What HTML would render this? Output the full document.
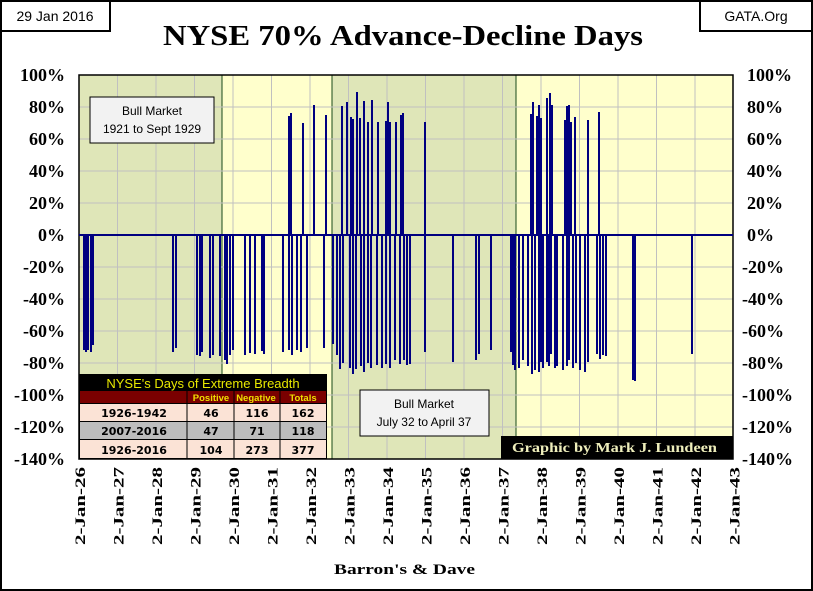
<!DOCTYPE html>
<html><head><meta charset="utf-8"><style>
body{margin:0;background:#fff;}
svg{display:block;}
</style></head><body>
<svg width="813" height="591" xmlns="http://www.w3.org/2000/svg" font-family="Liberation Serif, serif">
<rect x="1" y="1" width="811" height="589" fill="#fff" stroke="#000" stroke-width="2"/>
<rect x="1" y="1" width="109" height="30" fill="#fff" stroke="#000" stroke-width="2"/>
<text x="55" y="21" font-family="Liberation Sans, sans-serif" font-size="14" text-anchor="middle">29 Jan 2016</text>
<rect x="700" y="1" width="112" height="30" fill="#fff" stroke="#000" stroke-width="2"/>
<text x="756" y="21" font-family="Liberation Sans, sans-serif" font-size="14" text-anchor="middle">GATA.Org</text>
<text x="163" y="45" font-size="29" font-weight="bold" textLength="480" lengthAdjust="spacingAndGlyphs">NYSE 70% Advance-Decline Days</text>
<rect x="79" y="75" width="654" height="384" fill="#ffffcc"/>
<rect x="79" y="75" width="143" height="384" fill="#dfe6b8" stroke="#1a4a1a" stroke-width="1"/>
<rect x="332" y="75" width="184" height="384" fill="#dfe6b8" stroke="#1a4a1a" stroke-width="1"/>
<g stroke="#c0c0c0" stroke-width="1">
<line x1="79" y1="107" x2="733" y2="107"/><line x1="79" y1="139" x2="733" y2="139"/><line x1="79" y1="171" x2="733" y2="171"/><line x1="79" y1="203" x2="733" y2="203"/><line x1="79" y1="267" x2="733" y2="267"/><line x1="79" y1="299" x2="733" y2="299"/><line x1="79" y1="331" x2="733" y2="331"/><line x1="79" y1="363" x2="733" y2="363"/><line x1="79" y1="395" x2="733" y2="395"/><line x1="79" y1="427" x2="733" y2="427"/>
<line x1="117.5" y1="75" x2="117.5" y2="459"/><line x1="156" y1="75" x2="156" y2="459"/><line x1="194.5" y1="75" x2="194.5" y2="459"/><line x1="233" y1="75" x2="233" y2="459"/><line x1="271.5" y1="75" x2="271.5" y2="459"/><line x1="310" y1="75" x2="310" y2="459"/><line x1="348.5" y1="75" x2="348.5" y2="459"/><line x1="387" y1="75" x2="387" y2="459"/><line x1="425.5" y1="75" x2="425.5" y2="459"/><line x1="464" y1="75" x2="464" y2="459"/><line x1="502.5" y1="75" x2="502.5" y2="459"/><line x1="541" y1="75" x2="541" y2="459"/><line x1="579.5" y1="75" x2="579.5" y2="459"/><line x1="618" y1="75" x2="618" y2="459"/><line x1="656.5" y1="75" x2="656.5" y2="459"/><line x1="695" y1="75" x2="695" y2="459"/>
</g>
<rect x="79" y="75" width="654" height="384" fill="none" stroke="#000" stroke-width="1.5"/>
<g stroke="#000080" stroke-width="2">
<line x1="79" y1="235" x2="733" y2="235"/>
<path d="M289 235V116M291 235V113M303 235V123M314 235V105M326 235V115M342 235V106M347 235V102M351 235V117M353 235V119M357 235V92M360 235V118M364 235V101M368 235V122M372 235V100M378 235V122M386 235V121M388 235V102M390 235V122M396 235V122M401 235V115M403 235V113M425 235V122M531 235V114M533 235V102M537 235V116M539 235V105M541 235V118M547 235V98M550 235V93M552 235V105M565 235V120M567 235V106M569 235V105M571 235V122M575 235V117M588 235V120M599 235V112"/>
<path d="M84 235V350M86 235V352M88 235V350M91 235V352M93 235V345M173 235V352M176 235V348M197 235V355M200 235V356M202 235V352M210 235V358M213 235V355M220 235V356M225 235V360M227 235V364M230 235V355M233 235V350M245 235V355M250 235V353M255 235V354M262 235V351M264 235V354M283 235V352M289 235V350M292 235V355M297 235V350M301 235V352M307 235V348M324 235V348M333 235V344M337 235V355M340 235V369M343 235V363M350 235V368M353 235V374M356 235V369M361 235V366M364 235V372M368 235V363M371 235V368M377 235V365M382 235V368M386 235V364M390 235V368M395 235V360M400 235V364M404 235V360M407 235V365M410 235V364M425 235V352M453 235V362M476 235V360M479 235V354M491 235V350M511 235V352M513 235V365M515 235V370M519 235V368M523 235V360M528 235V366M532 235V374M535 235V370M539 235V372M541 235V362M543 235V368M547 235V362M549 235V366M551 235V354M555 235V368M557 235V366M563 235V370M567 235V366M569 235V360M573 235V368M576 235V363M580 235V370M585 235V372M588 235V362M597 235V354M600 235V359M603 235V355M606 235V356M633 235V380M635 235V381M692 235V354"/>
</g>
<rect x="90" y="97" width="124" height="46" fill="#f2f2f2" stroke="#000" stroke-width="1"/>
<text x="152" y="115" font-family="Liberation Sans, sans-serif" font-size="12" text-anchor="middle">Bull Market</text>
<text x="152" y="133" font-family="Liberation Sans, sans-serif" font-size="12" text-anchor="middle">1921 to Sept 1929</text>
<rect x="360" y="390" width="129" height="46" fill="#f2f2f2" stroke="#000" stroke-width="1"/>
<text x="424" y="408" font-family="Liberation Sans, sans-serif" font-size="12" text-anchor="middle">Bull Market</text>
<text x="424" y="426" font-family="Liberation Sans, sans-serif" font-size="12" text-anchor="middle">July 32 to April 37</text>
<rect x="79" y="374" width="248" height="85" fill="#000"/>
<text x="203" y="388" font-family="Liberation Sans, sans-serif" font-size="13" fill="#e8e800" text-anchor="middle">NYSE's Days of Extreme Breadth</text>
<rect x="80" y="391" width="246" height="12" fill="#7a0000"/>
<g font-family="Liberation Sans, sans-serif" font-size="9.5" font-weight="bold" fill="#f0e000" text-anchor="middle">
<text x="211" y="401">Positive</text><text x="256" y="401">Negative</text><text x="303" y="401">Totals</text></g>
<rect x="80" y="404" width="246" height="17" fill="#fbe3d6"/>
<rect x="80" y="422" width="246" height="17" fill="#bdbdbd"/>
<rect x="80" y="440" width="246" height="18" fill="#fbe3d6"/>
<g stroke="#000" stroke-width="1"><line x1="187" y1="391" x2="187" y2="459"/><line x1="234" y1="391" x2="234" y2="459"/><line x1="280" y1="391" x2="280" y2="459"/><line x1="80" y1="421.5" x2="326" y2="421.5"/><line x1="80" y1="439.5" x2="326" y2="439.5"/></g>
<g font-family="DejaVu Sans, sans-serif" font-size="11" font-weight="bold" text-anchor="middle">
<text x="134" y="417">1926-1942</text><text x="211" y="417">46</text><text x="257" y="417">116</text><text x="303" y="417">162</text>
<text x="134" y="435">2007-2016</text><text x="211" y="435">47</text><text x="257" y="435">71</text><text x="303" y="435">118</text>
<text x="134" y="454">1926-2016</text><text x="211" y="454">104</text><text x="257" y="454">273</text><text x="303" y="454">377</text></g>
<rect x="501" y="436" width="232" height="23" fill="#000"/>
<text x="512" y="452" font-size="14" font-weight="bold" fill="#eeeebb" textLength="205" lengthAdjust="spacingAndGlyphs">Graphic by Mark J. Lundeen</text>
<g font-size="18" font-weight="bold">
<g text-anchor="end">
<text x="65" y="81">100%</text><text x="65" y="113">80%</text><text x="65" y="145">60%</text><text x="65" y="177">40%</text><text x="65" y="209">20%</text><text x="65" y="241">0%</text><text x="65" y="273">-20%</text><text x="65" y="305">-40%</text><text x="65" y="337">-60%</text><text x="65" y="369">-80%</text><text x="65" y="401">-100%</text><text x="65" y="433">-120%</text><text x="65" y="465">-140%</text></g>
<g text-anchor="start">
<text x="747" y="81">100%</text><text x="747" y="113">80%</text><text x="747" y="145">60%</text><text x="747" y="177">40%</text><text x="747" y="209">20%</text><text x="747" y="241">0%</text><text x="742" y="273">-20%</text><text x="742" y="305">-40%</text><text x="742" y="337">-60%</text><text x="742" y="369">-80%</text><text x="742" y="401">-100%</text><text x="742" y="433">-120%</text><text x="742" y="465">-140%</text></g>
</g>
<g font-size="15" font-weight="bold">
<text transform="translate(85,545) rotate(-90)" textLength="78" lengthAdjust="spacingAndGlyphs">2-Jan-26</text>
<text transform="translate(123.5,545) rotate(-90)" textLength="78" lengthAdjust="spacingAndGlyphs">2-Jan-27</text>
<text transform="translate(162,545) rotate(-90)" textLength="78" lengthAdjust="spacingAndGlyphs">2-Jan-28</text>
<text transform="translate(200.5,545) rotate(-90)" textLength="78" lengthAdjust="spacingAndGlyphs">2-Jan-29</text>
<text transform="translate(239,545) rotate(-90)" textLength="78" lengthAdjust="spacingAndGlyphs">2-Jan-30</text>
<text transform="translate(277.5,545) rotate(-90)" textLength="78" lengthAdjust="spacingAndGlyphs">2-Jan-31</text>
<text transform="translate(316,545) rotate(-90)" textLength="78" lengthAdjust="spacingAndGlyphs">2-Jan-32</text>
<text transform="translate(354.5,545) rotate(-90)" textLength="78" lengthAdjust="spacingAndGlyphs">2-Jan-33</text>
<text transform="translate(393,545) rotate(-90)" textLength="78" lengthAdjust="spacingAndGlyphs">2-Jan-34</text>
<text transform="translate(431.5,545) rotate(-90)" textLength="78" lengthAdjust="spacingAndGlyphs">2-Jan-35</text>
<text transform="translate(470,545) rotate(-90)" textLength="78" lengthAdjust="spacingAndGlyphs">2-Jan-36</text>
<text transform="translate(508.5,545) rotate(-90)" textLength="78" lengthAdjust="spacingAndGlyphs">2-Jan-37</text>
<text transform="translate(547,545) rotate(-90)" textLength="78" lengthAdjust="spacingAndGlyphs">2-Jan-38</text>
<text transform="translate(585.5,545) rotate(-90)" textLength="78" lengthAdjust="spacingAndGlyphs">2-Jan-39</text>
<text transform="translate(624,545) rotate(-90)" textLength="78" lengthAdjust="spacingAndGlyphs">2-Jan-40</text>
<text transform="translate(662.5,545) rotate(-90)" textLength="78" lengthAdjust="spacingAndGlyphs">2-Jan-41</text>
<text transform="translate(701,545) rotate(-90)" textLength="78" lengthAdjust="spacingAndGlyphs">2-Jan-42</text>
<text transform="translate(739.5,545) rotate(-90)" textLength="78" lengthAdjust="spacingAndGlyphs">2-Jan-43</text>
</g>
<text x="334" y="574" font-size="15" font-weight="bold" textLength="141" lengthAdjust="spacingAndGlyphs">Barron's &amp; Dave</text>
</svg>
</body></html>
